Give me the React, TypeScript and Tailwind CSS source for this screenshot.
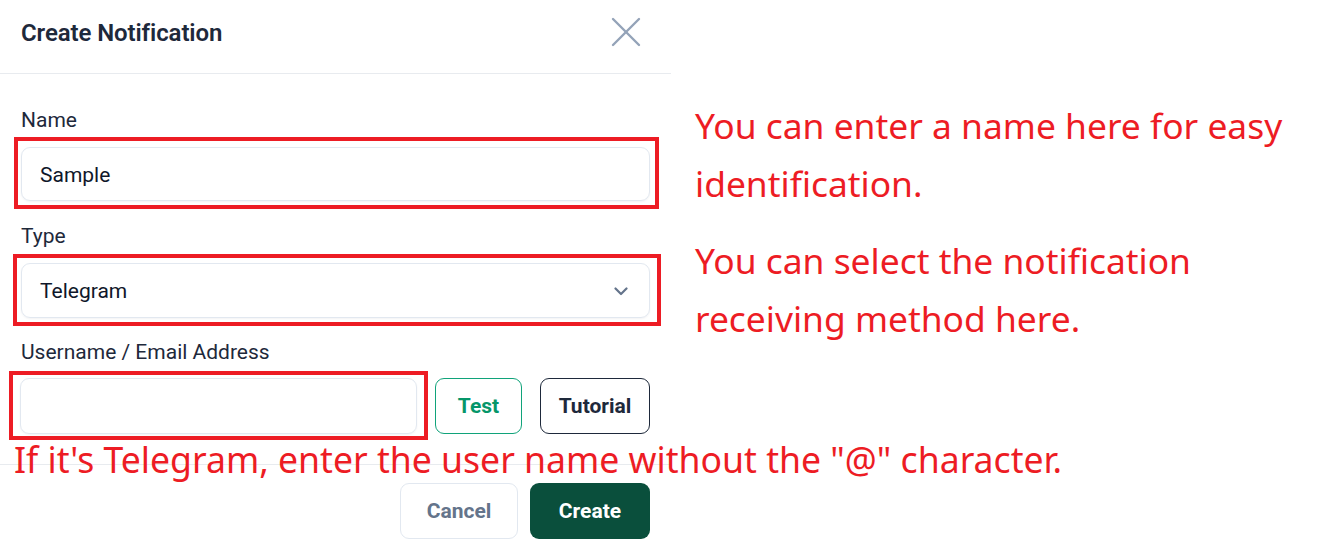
import React from 'react'

const ui = { fontFamily: 'Roboto, "Liberation Sans", sans-serif' }
const note = { fontFamily: '"Noto Sans", "Open Sans", sans-serif' }

function CloseIcon() {
  return (
    <svg width="30" height="30" viewBox="0 0 30 30" fill="none" stroke="#94a3b8" strokeWidth="2.4" strokeLinecap="round" aria-hidden="true">
      <line x1="2" y1="2" x2="28" y2="28" />
      <line x1="28" y1="2" x2="2" y2="28" />
    </svg>
  )
}

function Chevron() {
  return (
    <svg width="14" height="9" viewBox="0 0 14 9" fill="none" stroke="#64748b" strokeWidth="2.2" strokeLinecap="round" strokeLinejoin="round" aria-hidden="true">
      <polyline points="1.5,1.5 7,7 12.5,1.5" />
    </svg>
  )
}

export default function App() {
  return (
    <div className="relative flex w-[1329px] h-[551px] bg-white overflow-hidden" style={ui}>
      {/* dialog */}
      <div className="w-[671px] shrink-0 flex flex-col">
        <div className="h-[74px] flex items-center justify-between pl-[21px] pr-[30px] pb-[9px] border-b border-[#e8ebef]">
          <h2 className="text-[24px] font-semibold text-[#1e293b] tracking-[-0.1px] pt-[1px]">Create Notification</h2>
          <CloseIcon />
        </div>

        <div className="px-[21px] pt-[34px] pb-[24px] flex flex-col">
          <label className="text-[21px] leading-[24px] text-[#1e293b]">Name</label>
          <div className="mt-[5px] -ml-[7px] -mr-[9px] border-4 border-[#ed1c24] pl-[3px] pr-[5px] pt-[6px] pb-[4px]">
            <div className="h-[54px] rounded-[9px] border border-[#e2e8f0] flex items-center px-[18px] pt-[3px] text-[21px] text-[#0f172a] shadow-[0_1px_2px_rgba(15,23,42,0.05)]">
              Sample
            </div>
          </div>

          <label className="mt-[15px] text-[21px] leading-[24px] text-[#1e293b]">Type</label>
          <div className="mt-[6px] -ml-[8px] -mr-[11px] border-4 border-[#ed1c24] pl-[4px] pr-[7px] pt-[5px] pb-[4px]">
            <div className="h-[55px] rounded-[9px] border border-[#e2e8f0] flex items-center justify-between pl-[18px] pr-[21px] text-[21px] text-[#0f172a] shadow-[0_1px_2px_rgba(15,23,42,0.05)]">
              <span className="pt-[2px]">Telegram</span>
              <span className="pt-[2px]"><Chevron /></span>
            </div>
          </div>

          <label className="mt-[14px] text-[21px] leading-[24px] text-[#1e293b]">Username / Email Address</label>
          <div className="mt-[7px] flex items-center">
            <div className="-ml-[12px] w-[419px] border-4 border-[#ed1c24] px-[7px] pt-[3px] pb-[2px]">
              <div className="h-[56px] rounded-[9px] border border-[#e2e8f0] shadow-[0_1px_2px_rgba(15,23,42,0.05)]" />
            </div>
            <button className="ml-[7px] w-[87px] h-[56px] pt-[2px] rounded-[9px] border border-[#10a37a] text-[#059669] text-[21px] font-bold">
              Test
            </button>
            <button className="ml-[18px] w-[110px] h-[56px] pt-[2px] rounded-[9px] border border-[#1e293b] text-[#1e293b] text-[21px] font-bold">
              Tutorial
            </button>
          </div>
        </div>

        <div className="border-t border-[#e8ebef] flex justify-end gap-[12px] pr-[21px] pt-[18px]">
          <button className="w-[118px] h-[56px] pt-[2px] rounded-[9px] border border-[#e2e8f0] text-[#64748b] text-[21px] font-bold">
            Cancel
          </button>
          <button className="w-[120px] h-[56px] pt-[2px] rounded-[9px] bg-[#0a4f3c] text-white text-[21px] font-bold">
            Create
          </button>
        </div>
      </div>

      {/* annotations */}
      <div className="ml-[24px] pt-[96px] text-[#ed1c24] text-[35.4px] leading-[58px]" style={note}>
        <p>You can enter a name here for easy<br />identification.</p>
        <p className="mt-[19px]">You can select the notification<br />receiving method here.</p>
      </div>
      <p className="absolute left-[14px] top-[430px] text-[#ed1c24] text-[35.6px] leading-[58px] whitespace-nowrap" style={note}>
        If it's Telegram, enter the user name without the "@" character.
      </p>
    </div>
  )
}
